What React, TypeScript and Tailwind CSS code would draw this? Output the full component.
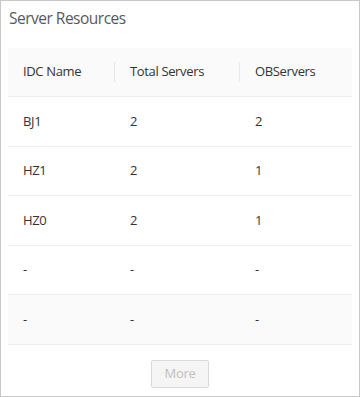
const rows = [
  { idc: "BJ1", total: "2", ob: "2" },
  { idc: "HZ1", total: "2", ob: "1" },
  { idc: "HZ0", total: "2", ob: "1" },
  { idc: "-", total: "-", ob: "-" },
  { idc: "-", total: "-", ob: "-" },
];

export default function App() {
  return (
    <div className="w-[360px] h-[397px] border border-[#c8c8c8] bg-white font-['Open_Sans',sans-serif] flex flex-col">
      <div className="px-2 pt-[6px] h-[47px] text-[15.5px] tracking-[-0.5px] text-[#595959]">Server Resources</div>
      <div className="mx-[7px] text-[13px] tracking-[-0.35px] text-[#333]">
        {/* header */}
        <div className="grid grid-cols-[107px_125px_1fr] h-[49px] items-center bg-[#fafafa] border-b border-[#ececec]">
          <div className="pl-[15px] border-r border-[#e8e8e8]">IDC Name</div>
          <div className="pl-[15px] border-r border-[#e8e8e8]">Total Servers</div>
          <div className="pl-[15px]">OBServers</div>
        </div>
        {rows.map((r, i) => (
          <div
            key={i}
            className={
              "grid grid-cols-[107px_125px_1fr] h-[49.5px] items-center border-b border-[#ececec] " +
              (i === 4 ? "bg-[#fafafa]" : "")
            }
          >
            <div className="pl-[15px]">{r.idc}</div>
            <div className="pl-[15px]">{r.total}</div>
            <div className="pl-[15px]">{r.ob}</div>
          </div>
        ))}
      </div>
      <div className="flex justify-center pt-[15px]">
        <button
          disabled
          className="w-[58px] h-[28px] border border-[#d9d9d9] bg-[#f5f5f5] rounded-[2px] text-[13px] tracking-[-0.3px] text-[#c0c0c0]"
        >
          More
        </button>
      </div>
    </div>
  );
}
